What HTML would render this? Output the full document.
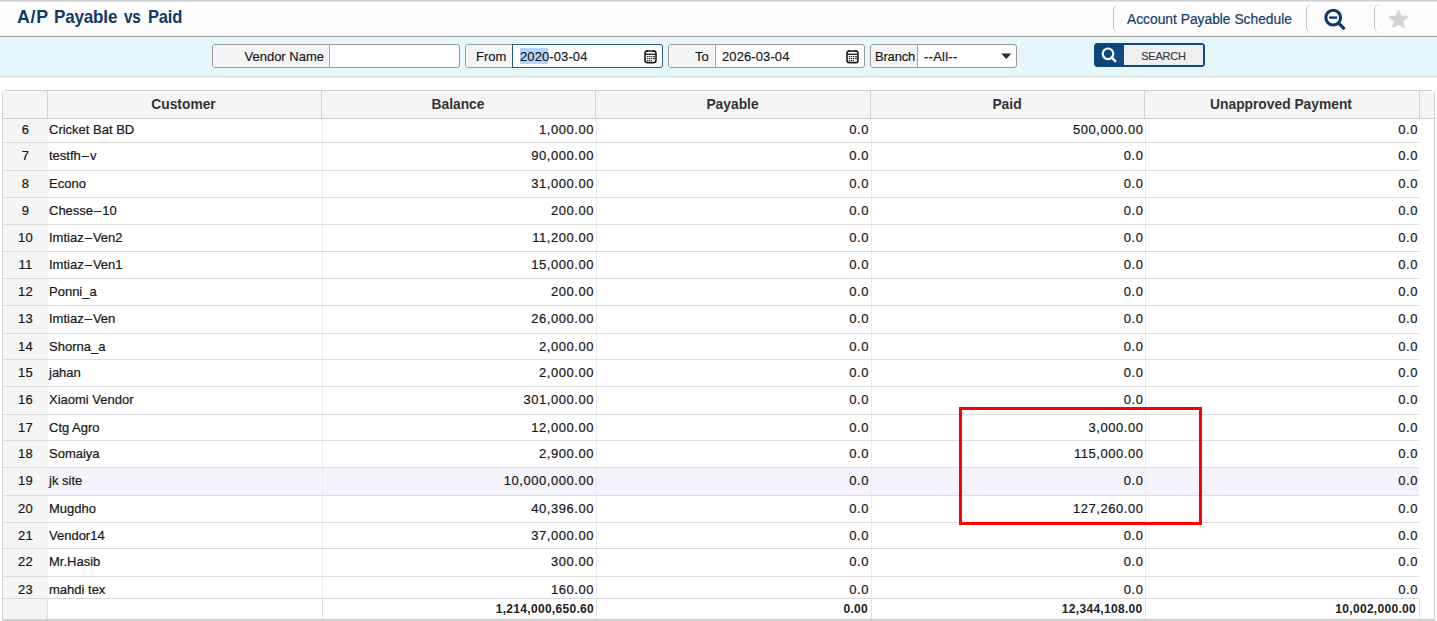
<!DOCTYPE html><html><head><meta charset="utf-8"><title>A/P Payable vs Paid</title><style>
*{margin:0;padding:0;box-sizing:border-box}
html,body{width:1437px;height:621px;overflow:hidden;background:#fff;font-family:"Liberation Sans",sans-serif;}
.a{position:absolute}
.t{position:absolute;white-space:nowrap;line-height:20px;height:20px}
#hdr{left:0;top:0;width:1437px;height:36px;background:#fcfcfc;border-top:1px solid #c9cdd0}
#hdr2{left:0;top:1px;width:1437px;height:1px;background:#e6e7e8}
#hline0{left:0;top:35px;width:1437px;height:1px;background:#ececec}
#hline{left:0;top:36px;width:1437px;height:1px;background:#a8a8a8}
#bar{left:0;top:37px;width:1437px;height:39px;background:#e6f7fc}
#barw{left:0;top:37px;width:1437px;height:1px;background:#f4fbfd}
#barb{left:0;top:76px;width:1437px;height:1px;background:#dbe2e4}
#barb2{left:0;top:77px;width:1437px;height:1px;background:#f0f0f0}
.title{top:2px;font-size:17.8px;font-weight:bold;color:#0f3a69;line-height:30px;height:30px;letter-spacing:-0.2px}
.sep{width:8px;border-left:1.5px solid #c4c4c4;border-radius:6px 0 0 6px}
.box{border:1px solid #9a9a9a;border-radius:3px;background:#fff;overflow:hidden;height:24px;top:44px}
.lab{position:absolute;left:0;top:0;height:22px;background:#f3f4f6;border-right:1px solid #a6a6a6}
.ft{font-size:13px;color:#141414;line-height:22px;-webkit-text-stroke:0.15px #141414}
.cal{position:absolute}
th,td{}
.tbl{left:2px;top:90px;width:1433px;height:531px;border:1px solid #d2d2d2;border-radius:4px 4px 0 0;background:#fff;overflow:hidden}
.hd{left:3px;top:91px;width:1431px;height:27px;background:#f5f5f5}
.hdb{left:3px;top:118px;width:1431px;height:1px;background:#cfcfcf}
.hv{top:91px;width:1px;height:27px;background:#d2d2d2}
.ht{top:95px;font-size:13.8px;font-weight:bold;color:#333;line-height:20px;text-align:center}
.rn{left:3px;top:119px;width:45px;height:480px;background:#f5f5f5}
.rl{left:3px;width:1416px;height:1px;background:#dcdcdc}
.dv{width:1px;background:#ececec}
.cell{font-size:13px;color:#161616;-webkit-text-stroke:0.2px #161616;line-height:20px;height:20px;position:absolute;white-space:nowrap}
.r{text-align:right}
.c{text-align:center}
.foot{font-size:12px;font-weight:bold;color:#222;line-height:20px;height:20px;position:absolute;white-space:nowrap;text-align:right}
</style></head><body>
<div class="a" id="hdr"></div><div class="a" id="hdr2"></div><div class="a" id="hline0"></div><div class="a" id="hline"></div>
<div class="t title" style="left:17px;letter-spacing:0.7px">A/P</div>
<div class="t title" style="left:53.5px;transform:scaleX(0.96);transform-origin:0 0">Payable</div>
<div class="t title" style="left:123.8px;transform:scaleX(0.86);transform-origin:0 0">vs</div>
<div class="t title" style="left:148.2px;transform:scaleX(0.93);transform-origin:0 0">Paid</div>
<div class="a sep" style="left:1113px;top:4px;height:29px"></div>
<div class="a sep" style="left:1306px;top:4px;height:29px"></div>
<div class="a sep" style="left:1374px;top:4px;height:29px"></div>
<div class="t" style="left:1127px;top:10px;font-size:13.8px;color:#12406f;line-height:20px;letter-spacing:0px;-webkit-text-stroke:0.2px #12406f">Account Payable Schedule</div>
<svg class="a" style="left:1322px;top:8px" width="26" height="24" viewBox="0 0 26 24">
<circle cx="11.2" cy="9.6" r="7.4" fill="none" stroke="#0c3c6e" stroke-width="3.1"/>
<line x1="7.2" y1="9.6" x2="15.2" y2="9.6" stroke="#0c3c6e" stroke-width="2.4"/>
<line x1="16.6" y1="15.2" x2="21.6" y2="20.2" stroke="#0c3c6e" stroke-width="3.3" stroke-linecap="round"/>
</svg>
<svg class="a" style="left:1389px;top:9.5px" width="19" height="18" viewBox="0 0 24 23">
<path d="M12 0.8 L15.2 8 L23.2 8.7 L17.1 13.9 L19 21.8 L12 17.6 L5 21.8 L6.9 13.9 L0.8 8.7 L8.8 8 Z" fill="#d3d3d3" stroke="#d3d3d3" stroke-width="2" stroke-linejoin="round"/>
</svg>
<div class="a" id="bar"></div><div class="a" id="barb"></div><div class="a" id="barb2"></div>
<div class="a box" style="left:212px;width:248px"><div class="lab" style="width:117px"></div></div>
<div class="t ft" style="left:212px;top:46px;width:112px;text-align:right">Vendor Name</div>
<div class="a box" style="left:465px;width:198px;"><div class="lab" style="width:48px"></div></div>
<div class="a" style="left:512px;top:44px;width:151px;height:24px;border:1px solid #2a5b86;border-radius:0 3px 3px 0;background:#fff"></div>
<div class="a" style="left:520px;top:48px;width:28px;height:16px;background:#b3d4fc"></div>
<div class="t ft" style="left:476px;top:46px">From</div>
<div class="t ft" style="left:520px;top:46px;letter-spacing:0.1px">2020-03-04</div>
<div class="a box" style="left:668px;width:197px"><div class="lab" style="width:47px"></div></div>
<div class="t ft" style="left:695px;top:46px">To</div>
<div class="t ft" style="left:722px;top:46px;letter-spacing:0.1px">2026-03-04</div>
<div class="a box" style="left:870px;width:147px"><div class="lab" style="width:47px"></div></div>
<div class="t ft" style="left:875px;top:46px;letter-spacing:-0.2px">Branch</div>
<div class="t ft" style="left:924px;top:46px;letter-spacing:0.25px">--All--</div>
<svg class="a" style="left:1001px;top:52.5px" width="11" height="7" viewBox="0 0 11 7"><path d="M0.3 0.5 H10.3 L5.3 6 Z" fill="#2b2b2b"/></svg>
<svg class="a" style="left:644px;top:49px" width="14" height="15" viewBox="0 0 14 15">
<rect x="1" y="2" width="11" height="11.6" rx="2.4" fill="#fff" stroke="#1c1c1c" stroke-width="1.6"/>
<rect x="2.2" y="0.9" width="2" height="2" rx="0.8" fill="#1c1c1c"/><rect x="8.8" y="0.9" width="2" height="2" rx="0.8" fill="#1c1c1c"/>
<line x1="1.2" y1="5.3" x2="11.8" y2="5.3" stroke="#1c1c1c" stroke-width="1.3"/>
<g fill="#3a3a3a"><rect x="3" y="7" width="8" height="1.2"/><rect x="3" y="9" width="8" height="1.2"/><rect x="3" y="11" width="5" height="1.2"/></g>
<g fill="#fff"><rect x="4.4" y="6.8" width="0.6" height="5.6"/><rect x="6.3" y="6.8" width="0.6" height="5.6"/><rect x="8.2" y="6.8" width="0.6" height="5.6"/></g>
</svg>
<svg class="a" style="left:846px;top:49px" width="14" height="15" viewBox="0 0 14 15">
<rect x="1" y="2" width="11" height="11.6" rx="2.4" fill="#fff" stroke="#1c1c1c" stroke-width="1.6"/>
<rect x="2.2" y="0.9" width="2" height="2" rx="0.8" fill="#1c1c1c"/><rect x="8.8" y="0.9" width="2" height="2" rx="0.8" fill="#1c1c1c"/>
<line x1="1.2" y1="5.3" x2="11.8" y2="5.3" stroke="#1c1c1c" stroke-width="1.3"/>
<g fill="#3a3a3a"><rect x="3" y="7" width="8" height="1.2"/><rect x="3" y="9" width="8" height="1.2"/><rect x="3" y="11" width="5" height="1.2"/></g>
<g fill="#fff"><rect x="4.4" y="6.8" width="0.6" height="5.6"/><rect x="6.3" y="6.8" width="0.6" height="5.6"/><rect x="8.2" y="6.8" width="0.6" height="5.6"/></g>
</svg>
<div class="a" style="left:1094px;top:43px;width:111px;height:24px;background:radial-gradient(ellipse at 60% 50%,#1a5690 0%,#0f4a82 55%,#0b3f73 100%);border:1px solid #0a4f84;border-radius:3px"></div>
<div class="a" style="left:1124px;top:45px;width:79px;height:20px;background:#efefef"></div>
<svg class="a" style="left:1098.6px;top:46px" width="20" height="18" viewBox="0 0 20 18"><circle cx="9" cy="7.8" r="5.3" fill="none" stroke="#fff" stroke-width="2.2"/><line x1="12.8" y1="11.6" x2="16.3" y2="15.2" stroke="#fff" stroke-width="2.4" stroke-linecap="round"/></svg>
<div class="t" style="left:1124px;top:46px;width:79px;text-align:center;font-size:11px;color:#3a3a3a;line-height:20px;letter-spacing:-0.2px;-webkit-text-stroke:0.15px #3a3a3a">SEARCH</div>
<div class="a tbl"></div>
<div class="a hd"></div>
<div class="a rn"></div>
<div class="a hv" style="left:47px"></div>
<div class="a hv" style="left:321px"></div>
<div class="a hv" style="left:595px"></div>
<div class="a hv" style="left:870px"></div>
<div class="a hv" style="left:1144px"></div>
<div class="a hv" style="left:1419px"></div>
<div class="a hdb"></div>
<div class="t ht" style="left:46px;width:275px">Customer</div>
<div class="t ht" style="left:321px;width:274px">Balance</div>
<div class="t ht" style="left:595px;width:275px">Payable</div>
<div class="t ht" style="left:870px;width:274px">Paid</div>
<div class="t ht" style="left:1144px;width:274px">Unapproved Payment</div>
<div class="a" style="left:47px;top:468px;width:1372px;height:27px;background:#f4f3fc"></div>
<div class="a dv" style="left:322px;top:119px;height:480px"></div>
<div class="a dv" style="left:596px;top:119px;height:480px"></div>
<div class="a dv" style="left:871px;top:119px;height:480px"></div>
<div class="a dv" style="left:1145px;top:119px;height:480px"></div>
<div class="a rl" style="top:142px;background:#dcdcdc"></div>
<div class="a rl" style="top:170px;background:#dcdcdc"></div>
<div class="a rl" style="top:197px;background:#dcdcdc"></div>
<div class="a rl" style="top:224px;background:#dcdcdc"></div>
<div class="a rl" style="top:251px;background:#dcdcdc"></div>
<div class="a rl" style="top:278px;background:#dcdcdc"></div>
<div class="a rl" style="top:305px;background:#dcdcdc"></div>
<div class="a rl" style="top:333px;background:#dcdcdc"></div>
<div class="a rl" style="top:359px;background:#dcdcdc"></div>
<div class="a rl" style="top:386px;background:#dcdcdc"></div>
<div class="a rl" style="top:414px;background:#dcdcdc"></div>
<div class="a rl" style="top:440px;background:#dcdcdc"></div>
<div class="a rl" style="top:467px;background:#dcdce4"></div>
<div class="a rl" style="top:495px;background:#dcdce4"></div>
<div class="a rl" style="top:522px;background:#dcdcdc"></div>
<div class="a rl" style="top:548px;background:#dcdcdc"></div>
<div class="a rl" style="top:576px;background:#dcdcdc"></div>
<div class="cell c" style="left:3px;width:45px;top:120px;letter-spacing:0.3px">6</div>
<div class="cell" style="left:49px;top:120px">Cricket Bat BD</div>
<div class="cell r" style="left:346px;width:248px;top:120px;letter-spacing:0.55px">1,000.00</div>
<div class="cell r" style="left:621px;width:248px;top:120px;letter-spacing:0.55px">0.0</div>
<div class="cell r" style="left:895.5px;width:248px;top:120px;letter-spacing:0.55px">500,000.00</div>
<div class="cell r" style="left:1170px;width:248px;top:120px;letter-spacing:0.55px">0.0</div>
<div class="cell c" style="left:3px;width:45px;top:146px;letter-spacing:0.3px">7</div>
<div class="cell" style="left:49px;top:146px">testfh<span style="margin:0 1px">&ndash;</span>v</div>
<div class="cell r" style="left:346px;width:248px;top:146px;letter-spacing:0.55px">90,000.00</div>
<div class="cell r" style="left:621px;width:248px;top:146px;letter-spacing:0.55px">0.0</div>
<div class="cell r" style="left:895.5px;width:248px;top:146px;letter-spacing:0.55px">0.0</div>
<div class="cell r" style="left:1170px;width:248px;top:146px;letter-spacing:0.55px">0.0</div>
<div class="cell c" style="left:3px;width:45px;top:174px;letter-spacing:0.3px">8</div>
<div class="cell" style="left:49px;top:174px">Econo</div>
<div class="cell r" style="left:346px;width:248px;top:174px;letter-spacing:0.55px">31,000.00</div>
<div class="cell r" style="left:621px;width:248px;top:174px;letter-spacing:0.55px">0.0</div>
<div class="cell r" style="left:895.5px;width:248px;top:174px;letter-spacing:0.55px">0.0</div>
<div class="cell r" style="left:1170px;width:248px;top:174px;letter-spacing:0.55px">0.0</div>
<div class="cell c" style="left:3px;width:45px;top:201px;letter-spacing:0.3px">9</div>
<div class="cell" style="left:49px;top:201px">Chesse<span style="margin:0 1px">&ndash;</span>10</div>
<div class="cell r" style="left:346px;width:248px;top:201px;letter-spacing:0.55px">200.00</div>
<div class="cell r" style="left:621px;width:248px;top:201px;letter-spacing:0.55px">0.0</div>
<div class="cell r" style="left:895.5px;width:248px;top:201px;letter-spacing:0.55px">0.0</div>
<div class="cell r" style="left:1170px;width:248px;top:201px;letter-spacing:0.55px">0.0</div>
<div class="cell c" style="left:3px;width:45px;top:228px;letter-spacing:0.3px">10</div>
<div class="cell" style="left:49px;top:228px">Imtiaz<span style="margin:0 1px">&ndash;</span>Ven2</div>
<div class="cell r" style="left:346px;width:248px;top:228px;letter-spacing:0.55px">11,200.00</div>
<div class="cell r" style="left:621px;width:248px;top:228px;letter-spacing:0.55px">0.0</div>
<div class="cell r" style="left:895.5px;width:248px;top:228px;letter-spacing:0.55px">0.0</div>
<div class="cell r" style="left:1170px;width:248px;top:228px;letter-spacing:0.55px">0.0</div>
<div class="cell c" style="left:3px;width:45px;top:255px;letter-spacing:0.3px">11</div>
<div class="cell" style="left:49px;top:255px">Imtiaz<span style="margin:0 1px">&ndash;</span>Ven1</div>
<div class="cell r" style="left:346px;width:248px;top:255px;letter-spacing:0.55px">15,000.00</div>
<div class="cell r" style="left:621px;width:248px;top:255px;letter-spacing:0.55px">0.0</div>
<div class="cell r" style="left:895.5px;width:248px;top:255px;letter-spacing:0.55px">0.0</div>
<div class="cell r" style="left:1170px;width:248px;top:255px;letter-spacing:0.55px">0.0</div>
<div class="cell c" style="left:3px;width:45px;top:282px;letter-spacing:0.3px">12</div>
<div class="cell" style="left:49px;top:282px">Ponni_a</div>
<div class="cell r" style="left:346px;width:248px;top:282px;letter-spacing:0.55px">200.00</div>
<div class="cell r" style="left:621px;width:248px;top:282px;letter-spacing:0.55px">0.0</div>
<div class="cell r" style="left:895.5px;width:248px;top:282px;letter-spacing:0.55px">0.0</div>
<div class="cell r" style="left:1170px;width:248px;top:282px;letter-spacing:0.55px">0.0</div>
<div class="cell c" style="left:3px;width:45px;top:309px;letter-spacing:0.3px">13</div>
<div class="cell" style="left:49px;top:309px">Imtiaz<span style="margin:0 1px">&ndash;</span>Ven</div>
<div class="cell r" style="left:346px;width:248px;top:309px;letter-spacing:0.55px">26,000.00</div>
<div class="cell r" style="left:621px;width:248px;top:309px;letter-spacing:0.55px">0.0</div>
<div class="cell r" style="left:895.5px;width:248px;top:309px;letter-spacing:0.55px">0.0</div>
<div class="cell r" style="left:1170px;width:248px;top:309px;letter-spacing:0.55px">0.0</div>
<div class="cell c" style="left:3px;width:45px;top:337px;letter-spacing:0.3px">14</div>
<div class="cell" style="left:49px;top:337px">Shorna_a</div>
<div class="cell r" style="left:346px;width:248px;top:337px;letter-spacing:0.55px">2,000.00</div>
<div class="cell r" style="left:621px;width:248px;top:337px;letter-spacing:0.55px">0.0</div>
<div class="cell r" style="left:895.5px;width:248px;top:337px;letter-spacing:0.55px">0.0</div>
<div class="cell r" style="left:1170px;width:248px;top:337px;letter-spacing:0.55px">0.0</div>
<div class="cell c" style="left:3px;width:45px;top:363px;letter-spacing:0.3px">15</div>
<div class="cell" style="left:49px;top:363px">jahan</div>
<div class="cell r" style="left:346px;width:248px;top:363px;letter-spacing:0.55px">2,000.00</div>
<div class="cell r" style="left:621px;width:248px;top:363px;letter-spacing:0.55px">0.0</div>
<div class="cell r" style="left:895.5px;width:248px;top:363px;letter-spacing:0.55px">0.0</div>
<div class="cell r" style="left:1170px;width:248px;top:363px;letter-spacing:0.55px">0.0</div>
<div class="cell c" style="left:3px;width:45px;top:390px;letter-spacing:0.3px">16</div>
<div class="cell" style="left:49px;top:390px">Xiaomi Vendor</div>
<div class="cell r" style="left:346px;width:248px;top:390px;letter-spacing:0.55px">301,000.00</div>
<div class="cell r" style="left:621px;width:248px;top:390px;letter-spacing:0.55px">0.0</div>
<div class="cell r" style="left:895.5px;width:248px;top:390px;letter-spacing:0.55px">0.0</div>
<div class="cell r" style="left:1170px;width:248px;top:390px;letter-spacing:0.55px">0.0</div>
<div class="cell c" style="left:3px;width:45px;top:418px;letter-spacing:0.3px">17</div>
<div class="cell" style="left:49px;top:418px">Ctg Agro</div>
<div class="cell r" style="left:346px;width:248px;top:418px;letter-spacing:0.55px">12,000.00</div>
<div class="cell r" style="left:621px;width:248px;top:418px;letter-spacing:0.55px">0.0</div>
<div class="cell r" style="left:895.5px;width:248px;top:418px;letter-spacing:0.55px">3,000.00</div>
<div class="cell r" style="left:1170px;width:248px;top:418px;letter-spacing:0.55px">0.0</div>
<div class="cell c" style="left:3px;width:45px;top:444px;letter-spacing:0.3px">18</div>
<div class="cell" style="left:49px;top:444px">Somaiya</div>
<div class="cell r" style="left:346px;width:248px;top:444px;letter-spacing:0.55px">2,900.00</div>
<div class="cell r" style="left:621px;width:248px;top:444px;letter-spacing:0.55px">0.0</div>
<div class="cell r" style="left:895.5px;width:248px;top:444px;letter-spacing:0.55px">115,000.00</div>
<div class="cell r" style="left:1170px;width:248px;top:444px;letter-spacing:0.55px">0.0</div>
<div class="cell c" style="left:3px;width:45px;top:471px;letter-spacing:0.3px">19</div>
<div class="cell" style="left:49px;top:471px">jk site</div>
<div class="cell r" style="left:346px;width:248px;top:471px;letter-spacing:0.55px">10,000,000.00</div>
<div class="cell r" style="left:621px;width:248px;top:471px;letter-spacing:0.55px">0.0</div>
<div class="cell r" style="left:895.5px;width:248px;top:471px;letter-spacing:0.55px">0.0</div>
<div class="cell r" style="left:1170px;width:248px;top:471px;letter-spacing:0.55px">0.0</div>
<div class="cell c" style="left:3px;width:45px;top:499px;letter-spacing:0.3px">20</div>
<div class="cell" style="left:49px;top:499px">Mugdho</div>
<div class="cell r" style="left:346px;width:248px;top:499px;letter-spacing:0.55px">40,396.00</div>
<div class="cell r" style="left:621px;width:248px;top:499px;letter-spacing:0.55px">0.0</div>
<div class="cell r" style="left:895.5px;width:248px;top:499px;letter-spacing:0.55px">127,260.00</div>
<div class="cell r" style="left:1170px;width:248px;top:499px;letter-spacing:0.55px">0.0</div>
<div class="cell c" style="left:3px;width:45px;top:526px;letter-spacing:0.3px">21</div>
<div class="cell" style="left:49px;top:526px">Vendor14</div>
<div class="cell r" style="left:346px;width:248px;top:526px;letter-spacing:0.55px">37,000.00</div>
<div class="cell r" style="left:621px;width:248px;top:526px;letter-spacing:0.55px">0.0</div>
<div class="cell r" style="left:895.5px;width:248px;top:526px;letter-spacing:0.55px">0.0</div>
<div class="cell r" style="left:1170px;width:248px;top:526px;letter-spacing:0.55px">0.0</div>
<div class="cell c" style="left:3px;width:45px;top:552px;letter-spacing:0.3px">22</div>
<div class="cell" style="left:49px;top:552px">Mr.Hasib</div>
<div class="cell r" style="left:346px;width:248px;top:552px;letter-spacing:0.55px">300.00</div>
<div class="cell r" style="left:621px;width:248px;top:552px;letter-spacing:0.55px">0.0</div>
<div class="cell r" style="left:895.5px;width:248px;top:552px;letter-spacing:0.55px">0.0</div>
<div class="cell r" style="left:1170px;width:248px;top:552px;letter-spacing:0.55px">0.0</div>
<div class="cell c" style="left:3px;width:45px;top:580px;letter-spacing:0.3px">23</div>
<div class="cell" style="left:49px;top:580px">mahdi tex</div>
<div class="cell r" style="left:346px;width:248px;top:580px;letter-spacing:0.55px">160.00</div>
<div class="cell r" style="left:621px;width:248px;top:580px;letter-spacing:0.55px">0.0</div>
<div class="cell r" style="left:895.5px;width:248px;top:580px;letter-spacing:0.55px">0.0</div>
<div class="cell r" style="left:1170px;width:248px;top:580px;letter-spacing:0.55px">0.0</div>
<div class="a" style="left:3px;top:598px;width:1416px;height:1px;background:#d8d8d8"></div>
<div class="a" style="left:3px;top:599px;width:1431px;height:20px;background:#fff"></div>
<div class="a" style="left:3px;top:599px;width:44px;height:20px;background:#f5f5f5"></div>
<div class="a" style="left:47px;top:599px;width:1px;height:20px;background:#e0e0e0"></div>
<div class="a" style="left:322px;top:599px;width:1px;height:20px;background:#e0e0e0"></div>
<div class="a" style="left:596px;top:599px;width:1px;height:20px;background:#e0e0e0"></div>
<div class="a" style="left:871px;top:599px;width:1px;height:20px;background:#e0e0e0"></div>
<div class="a" style="left:1145px;top:599px;width:1px;height:20px;background:#e0e0e0"></div>
<div class="a" style="left:1419px;top:599px;width:1px;height:20px;background:#e0e0e0"></div>
<div class="a" style="left:3px;top:619px;width:1431px;height:2px;background:#cfcfcf"></div>
<div class="foot" style="left:347px;width:247px;top:599px;letter-spacing:0.3px">1,214,000,650.60</div>
<div class="foot" style="left:621px;width:247px;top:599px;letter-spacing:0.3px">0.00</div>
<div class="foot" style="left:895.5px;width:247px;top:599px;letter-spacing:0.3px">12,344,108.00</div>
<div class="foot" style="left:1169px;width:247px;top:599px;letter-spacing:0.3px">10,002,000.00</div>
<div class="a" style="left:959px;top:407px;width:243px;height:118px;border:3px solid #fe0000"></div>
</body></html>
